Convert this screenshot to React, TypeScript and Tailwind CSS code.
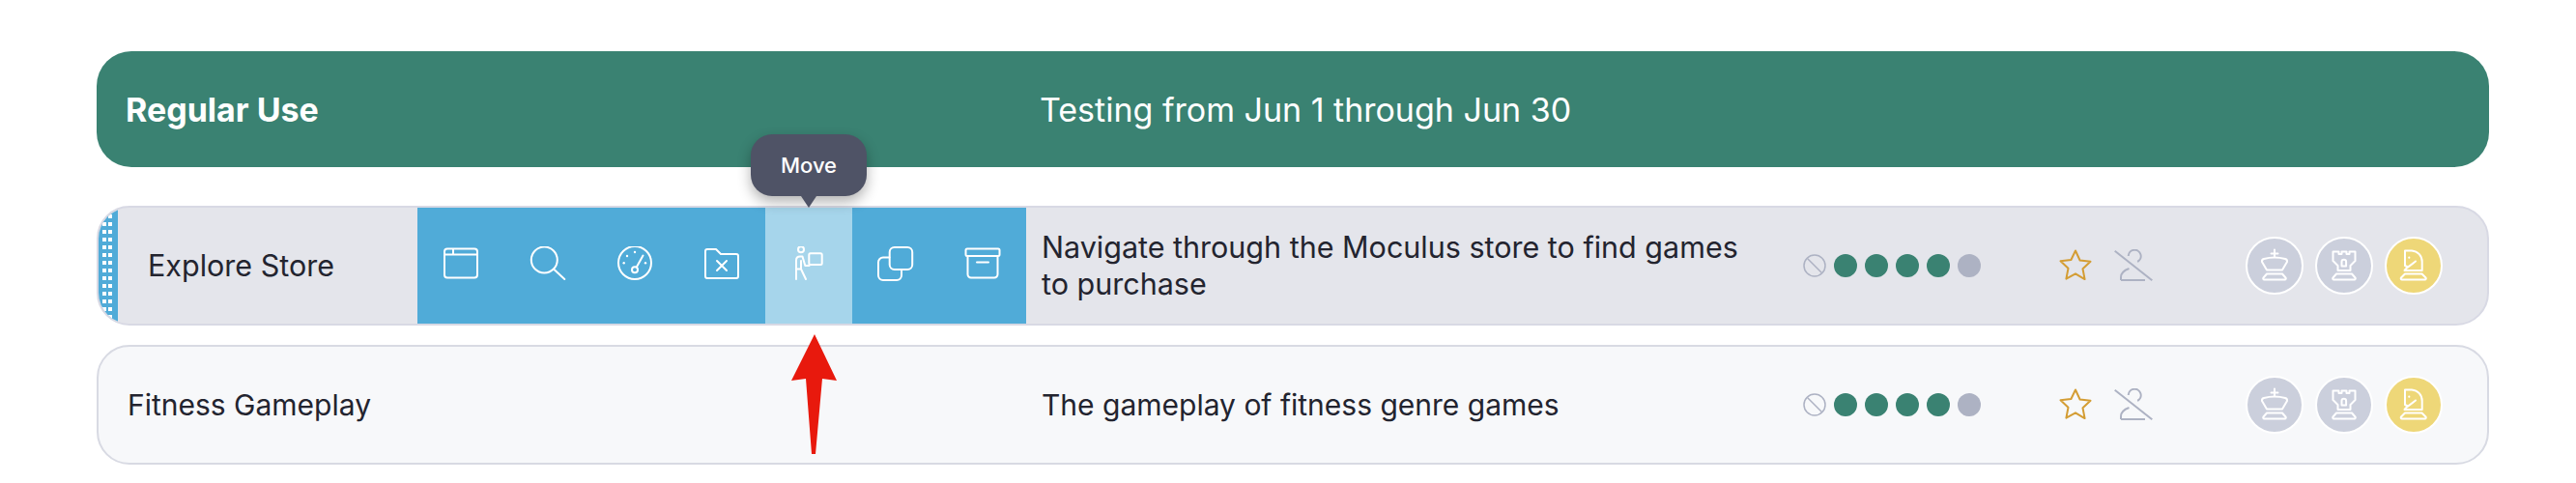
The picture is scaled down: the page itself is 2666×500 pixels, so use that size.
const font = "font-['Inter','Noto_Sans',sans-serif]";

function WindowIcon() {
  return (
    <svg width="40" height="40" viewBox="0 0 40 40" fill="none" stroke="currentColor" strokeWidth="2">
      <rect x="3" y="2.5" width="34" height="30" rx="3" />
      <path d="M3 8.5h34M12 2.5v6" />
    </svg>
  );
}

function SearchIcon() {
  return (
    <svg width="40" height="40" viewBox="0 0 40 40" fill="none" stroke="currentColor" strokeWidth="2" strokeLinecap="round">
      <circle cx="16.3" cy="14" r="13.5" />
      <path d="M26.5 24L37.3 34" />
    </svg>
  );
}

function GaugeIcon() {
  return (
    <svg width="40" height="40" viewBox="0 0 40 40" fill="none" stroke="currentColor" strokeWidth="2" strokeLinecap="round">
      <circle cx="20" cy="17" r="17" />
      <circle cx="20" cy="24.3" r="3" />
      <path d="M21.8 21.5L28.5 9.5" />
      <g fill="currentColor" stroke="none">
        <circle cx="12" cy="10" r="1.2" />
        <circle cx="20" cy="6" r="1.2" />
        <circle cx="8.7" cy="17.3" r="1.2" />
        <circle cx="31" cy="17.3" r="1.2" />
      </g>
    </svg>
  );
}

function FolderXIcon() {
  return (
    <svg width="40" height="40" viewBox="0 0 40 40" fill="none" stroke="currentColor" strokeWidth="2" strokeLinecap="round" strokeLinejoin="round">
      <path d="M3 5a2 2 0 0 1 2-2h9l5 5h16a2 2 0 0 1 2 2v21a2 2 0 0 1-2 2H5a2 2 0 0 1-2-2z" />
      <path d="M15 15l10 10M25 15l-10 10" />
    </svg>
  );
}

function MoveIcon() {
  return (
    <svg width="40" height="40" viewBox="0 0 40 40" fill="none" stroke="currentColor" strokeWidth="2" strokeLinecap="round" strokeLinejoin="round">
      <circle cx="12" cy="3.2" r="3" />
      <rect x="20.3" y="7.3" width="13.4" height="11.7" rx="1.5" />
      <path d="M20.5 20h-4.2L13.5 10.5H11q-4 0-4 4V34M7 23.5h5L17 34M12 15v8.5" />
    </svg>
  );
}

function CopyIcon() {
  return (
    <svg width="40" height="40" viewBox="0 0 40 40" fill="none" stroke="currentColor" strokeWidth="2" strokeLinecap="round" strokeLinejoin="round">
      <rect x="13.7" y="1" width="23.5" height="23" rx="5" />
      <path d="M13.5 11.5H7a5 5 0 0 0-5 5V30a5 5 0 0 0 5 5h14a5 5 0 0 0 5-5v-5.5" />
    </svg>
  );
}

function ArchiveIcon() {
  return (
    <svg width="40" height="40" viewBox="0 0 40 40" fill="none" stroke="currentColor" strokeWidth="2" strokeLinecap="round" strokeLinejoin="round">
      <rect x="2.5" y="2.5" width="35" height="7.5" rx="1.5" />
      <path d="M4.5 10v19a3.5 3.5 0 0 0 3.5 3.5h24a3.5 3.5 0 0 0 3.5-3.5V10M14 16.5h12" />
    </svg>
  );
}

function StarIcon() {
  return (
    <svg width="34" height="34" viewBox="0 0 34 34" fill="none" stroke="#d49d34" strokeWidth="2" strokeLinejoin="round">
      <path d="M17 1.5l4.6 10 10.9 1.3-8 7.5 2.1 10.8L17 25.3 7.4 30.6l2.1-10.8-8-7.5 10.9-1.3z" />
    </svg>
  );
}

function HangerOffIcon() {
  return (
    <svg width="40" height="34" viewBox="0 0 40 34" fill="none" stroke="#adb2c3" strokeWidth="2">
      <path d="M.7 1.7L39.3 32.3" />
      <path d="M14.7 7a6.5 6.5 0 1 1 9.5 6" />
      <path d="M7 32v-3c0-4 3-7 8.5-9M7 32h25" />
    </svg>
  );
}

function KingIcon() {
  return (
    <svg width="32" height="38" viewBox="0 0 32 38" fill="none" stroke="currentColor" strokeWidth="2" strokeLinejoin="round" strokeLinecap="round">
      <path d="M16 2.5v7M12.5 6.5h7" />
      <path d="M5 12q11-3 22 0c1.800.5 2.300 1.500 2 3l-5 8.500H8L3 15c-.3-1.500.2-2.500 2-3z" />
      <path d="M8 27.5h16l3.500 4a1.200 1.200 0 0 1-1 2h-21a1.200 1.200 0 0 1-1-2z" />
    </svg>
  );
}

function RookIcon() {
  return (
    <svg width="32" height="38" viewBox="0 0 32 38" fill="none" stroke="currentColor" strokeWidth="2" strokeLinejoin="round" strokeLinecap="round">
      <path d="M4.500 4.500h6v2.500h3V4.500h5V7h3V4.500h6V14l-5 5v5H9.500v-5l-5-5z" />
      <path d="M13.500 19.500V15a2.300 2.300 0 0 1 4.600 0v4.500z" />
      <path d="M8 27.500h16l3.500 4a1.200 1.200 0 0 1-1 2h-21a1.200 1.200 0 0 1-1-2z" />
    </svg>
  );
}

function KnightIcon() {
  return (
    <svg width="32" height="38" viewBox="0 0 32 38" fill="none" stroke="currentColor" strokeWidth="2" strokeLinejoin="round" strokeLinecap="round">
      <path d="M7 3.500h7c6.500.5 10.700 5.500 10.700 11.500v9H6.500c0-1 3.500-3 11.500-9.500L10 20.500 7 19z" />
      <circle cx="11.300" cy="10.700" r="1.100" fill="currentColor" stroke="none" />
      <path d="M7 27.500h17.500l4 4a1.200 1.200 0 0 1-1 2H4a1.200 1.200 0 0 1-1-2z" />
    </svg>
  );
}

function Status() {
  return (
    <div className="flex items-center gap-2 w-[265px] shrink-0">
      <svg width="24" height="24" viewBox="0 0 24 24" fill="none" stroke="#adb2c3" strokeWidth="1.5">
        <circle cx="12" cy="12" r="11" />
        <path d="M4.500 4.500l15 15" />
      </svg>
      {[0, 1, 2, 3].map((i) => (
        <span key={i} className="w-6 h-6 rounded-full bg-[#3a8272]" />
      ))}
      <span className="w-6 h-6 rounded-full bg-[#adb2c3]" />
    </div>
  );
}

function Badges() {
  const base = 'w-[60px] h-[60px] rounded-full border-2 border-white flex items-center justify-center text-white';
  return (
    <div className="flex gap-3 shrink-0">
      <div className={`${base} bg-[#cbcfdc]`}><KingIcon /></div>
      <div className={`${base} bg-[#cbcfdc]`}><RookIcon /></div>
      <div className={`${base} bg-[#eed778]`}><KnightIcon /></div>
    </div>
  );
}

function RowTail() {
  return (
    <>
      <Status />
      <div className="flex items-center gap-[23px] w-[193px] shrink-0">
        <StarIcon />
        <HangerOffIcon />
      </div>
    </>
  );
}

const actions = [WindowIcon, SearchIcon, GaugeIcon, FolderXIcon, MoveIcon, CopyIcon, ArchiveIcon];

export default function App() {
  return (
    <div className={`relative w-[2666px] h-[500px] bg-white px-[100px] pt-[53px] ${font}`}>
      <div className="w-[2476px] h-[120px] rounded-[36px] bg-[#3a8272] flex items-center text-white text-[34px]">
        <div className="w-[976px] pl-[30px] font-bold">Regular Use</div>
        <div>Testing from Jun 1 through Jun 30</div>
      </div>

      <div className="mt-10 w-[2476px] h-[124px] rounded-[34px] border-2 border-[#d8d9e4] bg-[#e4e5eb] flex items-stretch overflow-hidden text-[#23242f] text-[30.5px]">
        <div className="w-5 shrink-0 bg-[#50abd8] pl-1 pt-[6.5px] overflow-hidden">
          <div className="grid grid-cols-2 w-[10px] gap-x-[2px] gap-y-1">
            {Array.from({ length: 30 }, (_, i) => (
              <span key={i} className="w-1 h-1 bg-white" />
            ))}
          </div>
        </div>
        <div className="w-[310px] shrink-0 pl-[31px] flex items-center">Explore Store</div>
        <div className="flex shrink-0">
          {actions.map((Icon, i) => (
            <div
              key={i}
              className={`w-[90px] flex items-center justify-center text-white ${i === 4 ? 'bg-[#a6d5eb]' : 'bg-[#50abd8]'}`}
            >
              <Icon />
            </div>
          ))}
        </div>
        <div className="w-[804px] shrink-0 pl-4 pr-12 flex items-center leading-[38px]">
          Navigate through the Moculus store to find games to purchase
        </div>
        <div className="flex items-center">
          <RowTail />
          <Badges />
        </div>
      </div>

      <div className="mt-5 w-[2476px] h-[124px] rounded-[34px] border-2 border-[#d8dae3] bg-[#f7f8fa] flex items-center text-[#23242f] text-[30px]">
        <div className="w-[976px] shrink-0 pl-[30px]">Fitness Gameplay</div>
        <div className="w-[788px] shrink-0">The gameplay of fitness genre games</div>
        <RowTail />
        <Badges />
      </div>

      {/* tooltip over the Move action */}
      <div className="absolute left-[777px] top-[139px] w-[120px] h-16 rounded-[22px] bg-[#4f5366] text-white text-[22px] font-medium flex items-center justify-center shadow-[0_6px_14px_rgba(0,0,0,0.3)]">
        Move
        <span className="absolute left-[52px] top-full w-0 h-0 border-x-8 border-x-transparent border-t-[12px] border-t-[#4f5366]" />
      </div>

      {/* red annotation arrow */}
      <svg className="absolute left-[815px] top-[342px]" width="56" height="132" viewBox="0 0 56 132">
        <path d="M28 4L51 52L36 50L29 128L25 128L19 50L4 52Z" fill="#e8190d" />
      </svg>
    </div>
  );
}
